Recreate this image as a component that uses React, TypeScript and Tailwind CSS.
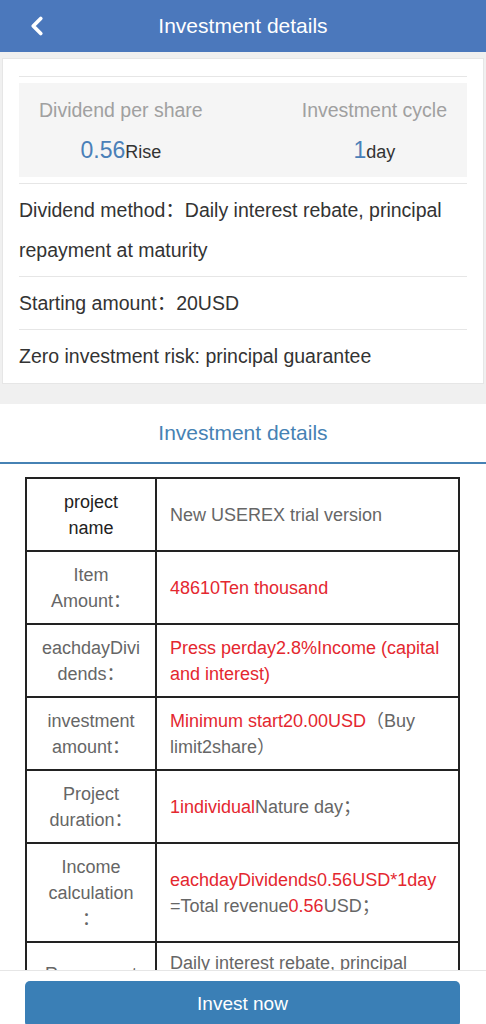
import React from 'react';
import { ChevronLeft } from 'lucide-react';

interface DetailRow {
  label: string[];
  dark?: boolean;
  top?: boolean;
  value: React.ReactNode;
}

const red = 'text-[#e4272f]';

const rows: DetailRow[] = [
  { label: ['project', 'name'], dark: true, value: <span>New USEREX trial version</span> },
  { label: ['Item', 'Amount：'], value: <span className={red}>48610Ten thousand</span> },
  {
    label: ['eachdayDivi', 'dends：'],
    value: <span className={red}>Press perday2.8%Income (capital and interest)</span>,
  },
  {
    label: ['investment', 'amount：'],
    value: (
      <>
        <span className={red}>Minimum start20.00USD</span>（Buy limit2share）
      </>
    ),
  },
  {
    label: ['Project', 'duration：'],
    value: (
      <>
        <span className={red}>1individual</span>Nature day；
      </>
    ),
  },
  {
    label: ['Income', 'calculation', '：'],
    value: (
      <>
        <span className={red}>eachdayDividends0.56USD*1day</span> =Total revenue
        <span className={red}>0.56</span>USD；
      </>
    ),
  },
  {
    label: ['Repayment', 'method', '：'],
    top: true,
    value: <span>Daily interest rebate, principal repayment at maturity</span>,
  },
];

export default function App() {
  return (
    <div className="min-h-screen bg-[#f0f0f0] font-['Liberation_Sans','Noto_Sans_CJK_SC',sans-serif] text-[#333]">
      {/* top bar */}
      <div className="relative flex h-[52px] items-center justify-center bg-[#4b78bc] text-[21px] text-white">
        <ChevronLeft size={30} strokeWidth={3} className="absolute left-[22px] top-[11px]" />
        Investment details
      </div>

      {/* summary card */}
      <div className="mx-[2px] mt-[6px] border border-[#e6e6e6] bg-white px-4 pt-[17px]">
        <div className="border-y border-[#e6e6e6] py-[6px]">
          <div className="flex justify-between bg-[#f5f5f5] px-5 pt-[15px] pb-[11px]">
            <div className="text-center">
              <div className="text-[19.5px] leading-[24px] text-[#a0a0a0]">Dividend per share</div>
              <div className="mt-[12px] h-[32px] leading-[32px]">
                <span className="text-[23px] text-[#4a80b8]">0.56</span>
                <span className="text-[18px] text-[#333]">Rise</span>
              </div>
            </div>
            <div className="text-center">
              <div className="text-[19.5px] leading-[24px] text-[#a0a0a0]">Investment cycle</div>
              <div className="mt-[12px] h-[32px] leading-[32px]">
                <span className="text-[23px] text-[#4a80b8]">1</span>
                <span className="text-[18px] text-[#333]">day</span>
              </div>
            </div>
          </div>
        </div>
        <div className="border-b border-[#e6e6e6] py-1.5 text-[19.5px] leading-[40px]">
          Dividend method：Daily interest rebate, principal repayment at maturity
        </div>
        <div className="border-b border-[#e6e6e6] py-1.5 text-[19.5px] leading-[40px]">
          Starting amount：20USD
        </div>
        <div className="pt-1.5 pb-[7px] text-[19.5px] leading-[40px]">Zero investment risk: principal guarantee</div>
      </div>

      {/* details */}
      <div className="mt-[20px] bg-white">
        <div className="flex h-[60px] items-center justify-center border-b-2 border-[#4682b4] text-[21px] text-[#4682b4]">
          Investment details
        </div>
        <div className="pl-[25px] pr-[26px] pt-[13px] pb-[90px]">
          <table className="w-full border-collapse text-[18px] leading-[26px]">
            <tbody>
              {rows.map((r, i) => (
                <tr key={i}>
                  <td
                    className={`w-[130px] border-2 border-[#222] px-[12px] text-center ${
                      r.dark ? 'text-[#222]' : 'text-[#666]'
                    } ${r.top ? 'pt-[18px] pb-[18px]' : 'py-[9.5px]'}`}
                  >
                    {r.label.map((l, j) => (
                      <div key={j}>{l}</div>
                    ))}
                  </td>
                  <td
                    className={`border-2 border-[#222] px-[13px] text-[#666] ${
                      r.top ? 'pt-[7px] align-top' : 'py-[9.5px]'
                    }`}
                  >
                    {r.value}
                  </td>
                </tr>
              ))}
            </tbody>
          </table>
        </div>
      </div>

      {/* bottom action */}
      <div className="fixed inset-x-0 bottom-0 h-[54px] overflow-hidden border-t border-[#e6e6e6] bg-white pl-[25px] pr-[26px] pt-[10px]">
        <button className="h-[46px] w-full rounded-[5px] bg-[#3a7fb6] text-[19px] text-white">Invest now</button>
      </div>
    </div>
  );
}
